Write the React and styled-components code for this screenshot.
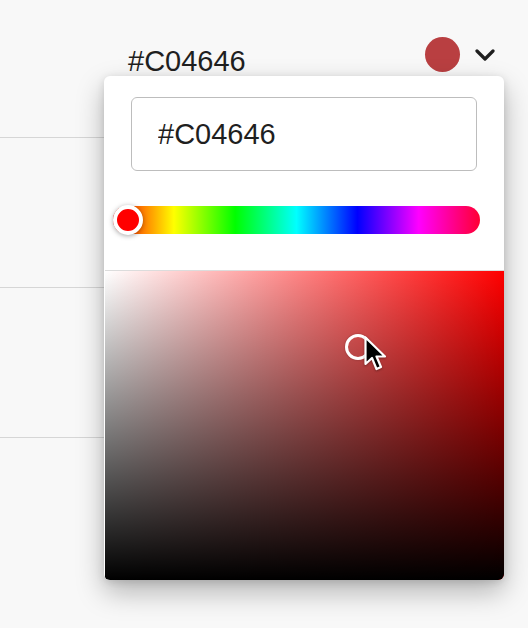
import React, { useState } from 'react';
import styled, { createGlobalStyle } from 'styled-components';

const GlobalStyle = createGlobalStyle`
  html, body {
    margin: 0;
    padding: 0;
    background: #f8f8f8;
    font-family: "Liberation Sans", Arial, sans-serif;
  }
`;

const Page = styled.div`
  position: relative;
  width: 528px;
  height: 628px;
  overflow: hidden;
  background: #f8f8f8;
`;

const Trigger = styled.div`
  display: flex;
  align-items: flex-end;
  height: 39px;
  padding-top: 37px;
  margin-left: 128px;
  width: 367px;
`;

const Value = styled.span`
  flex: 1;
  font-size: 29px;
  line-height: 29px;
  color: #1f1f1f;
`;

const Swatch = styled.div`
  width: 35px;
  height: 35px;
  border-radius: 50%;
  background: ${p => p.color};
  margin-bottom: 4px;
`;

const Chevron = styled.svg`
  width: 20px;
  height: 12px;
  margin-left: 15px;
  margin-bottom: 15px;
`;

const List = styled.div`
  width: 440px;
`;

const Row = styled.div`
  height: ${p => p.h}px;
  border-bottom: 1px solid #d6d6d6;
`;

const Popover = styled.div`
  position: absolute;
  left: 104px;
  top: 76px;
  width: 400px;
  height: 504px;
  border-radius: 6px;
  background: #fff;
  overflow: hidden;
  box-shadow: 0 12px 28px rgba(0, 0, 0, 0.28), 0 2px 8px rgba(0, 0, 0, 0.12);
  display: flex;
  flex-direction: column;
`;

const Controls = styled.div`
  height: 194px;
  display: flex;
  flex-direction: column;
`;

const HexInput = styled.input`
  box-sizing: border-box;
  margin: 21px 0 0 27px;
  width: 346px;
  height: 74px;
  border: 1.5px solid #bdbdbd;
  border-radius: 6px;
  padding: 0 0 0 26px;
  font-family: "Liberation Sans", Arial, sans-serif;
  font-size: 29px;
  color: #1f1f1f;
  outline: none;
  background: #fff;
`;

const Hue = styled.div`
  position: relative;
  margin: 35px 0 0 9px;
  width: 367px;
  height: 28px;
  border-radius: 14px;
  background: linear-gradient(
    to right,
    #f00 0%,
    #ff0 16.6%,
    #0f0 33.3%,
    #0ff 50%,
    #00f 66.6%,
    #f0f 83.3%,
    #f03 100%
  );
`;

const HueThumb = styled.div`
  position: absolute;
  left: ${p => p.pos}px;
  top: -1px;
  width: 30px;
  height: 30px;
  box-sizing: border-box;
  border-radius: 50%;
  border: 4px solid #fff;
  background: #f00;
  box-shadow: 0 1px 5px rgba(0, 0, 0, 0.35);
`;

const Saturation = styled.div`
  position: relative;
  flex: 1;
  margin-left: 1px;
  border-top: 1px solid #dcdcdc;
  background:
    linear-gradient(to bottom, rgba(0, 0, 0, 0), #000),
    linear-gradient(to right, #fff, #f00);
`;

const Picker = styled.div`
  position: absolute;
  width: 26px;
  height: 26px;
  box-sizing: border-box;
  border-radius: 50%;
  border: 3px solid #fff;
  box-shadow: 0 0 2px rgba(0, 0, 0, 0.3);
  transform: translate(-50%, -50%);
`;

const Pointer = styled.svg`
  position: absolute;
  width: 24px;
  height: 38px;
  filter: drop-shadow(0 1px 1px rgba(0, 0, 0, 0.35));
`;

export default function App() {
  const [hex, setHex] = useState('#C04646');

  return (
    <Page>
      <GlobalStyle />
      <Trigger>
        <Value>{hex}</Value>
        <Swatch color="#b93f41" />
        <Chevron viewBox="0 0 20 12">
          <path d="M2 2 L10 10 L18 2" fill="none" stroke="#1f1f1f" strokeWidth="3.2" strokeLinecap="round" strokeLinejoin="round" />
        </Chevron>
      </Trigger>
      <List>
        <Row h={61} />
        <Row h={149} />
        <Row h={149} />
      </List>

      <Popover>
        <Controls>
          <HexInput value={hex} onChange={e => setHex(e.target.value)} />
          <Hue>
            <HueThumb pos={0} />
          </Hue>
        </Controls>
        <Saturation>
          <Picker style={{ left: 253, top: 76 }} />
          <Pointer viewBox="0 0 24 38" style={{ left: 258, top: 64 }}>
            <path
              d="M2.5 2.5 L2.5 29 L9 23 L13.5 34 L18 32 L13.5 21.5 L22 21.5 Z"
              fill="#000"
              stroke="#fff"
              strokeWidth="2.2"
              strokeLinejoin="round"
            />
          </Pointer>
        </Saturation>
      </Popover>
    </Page>
  );
}
